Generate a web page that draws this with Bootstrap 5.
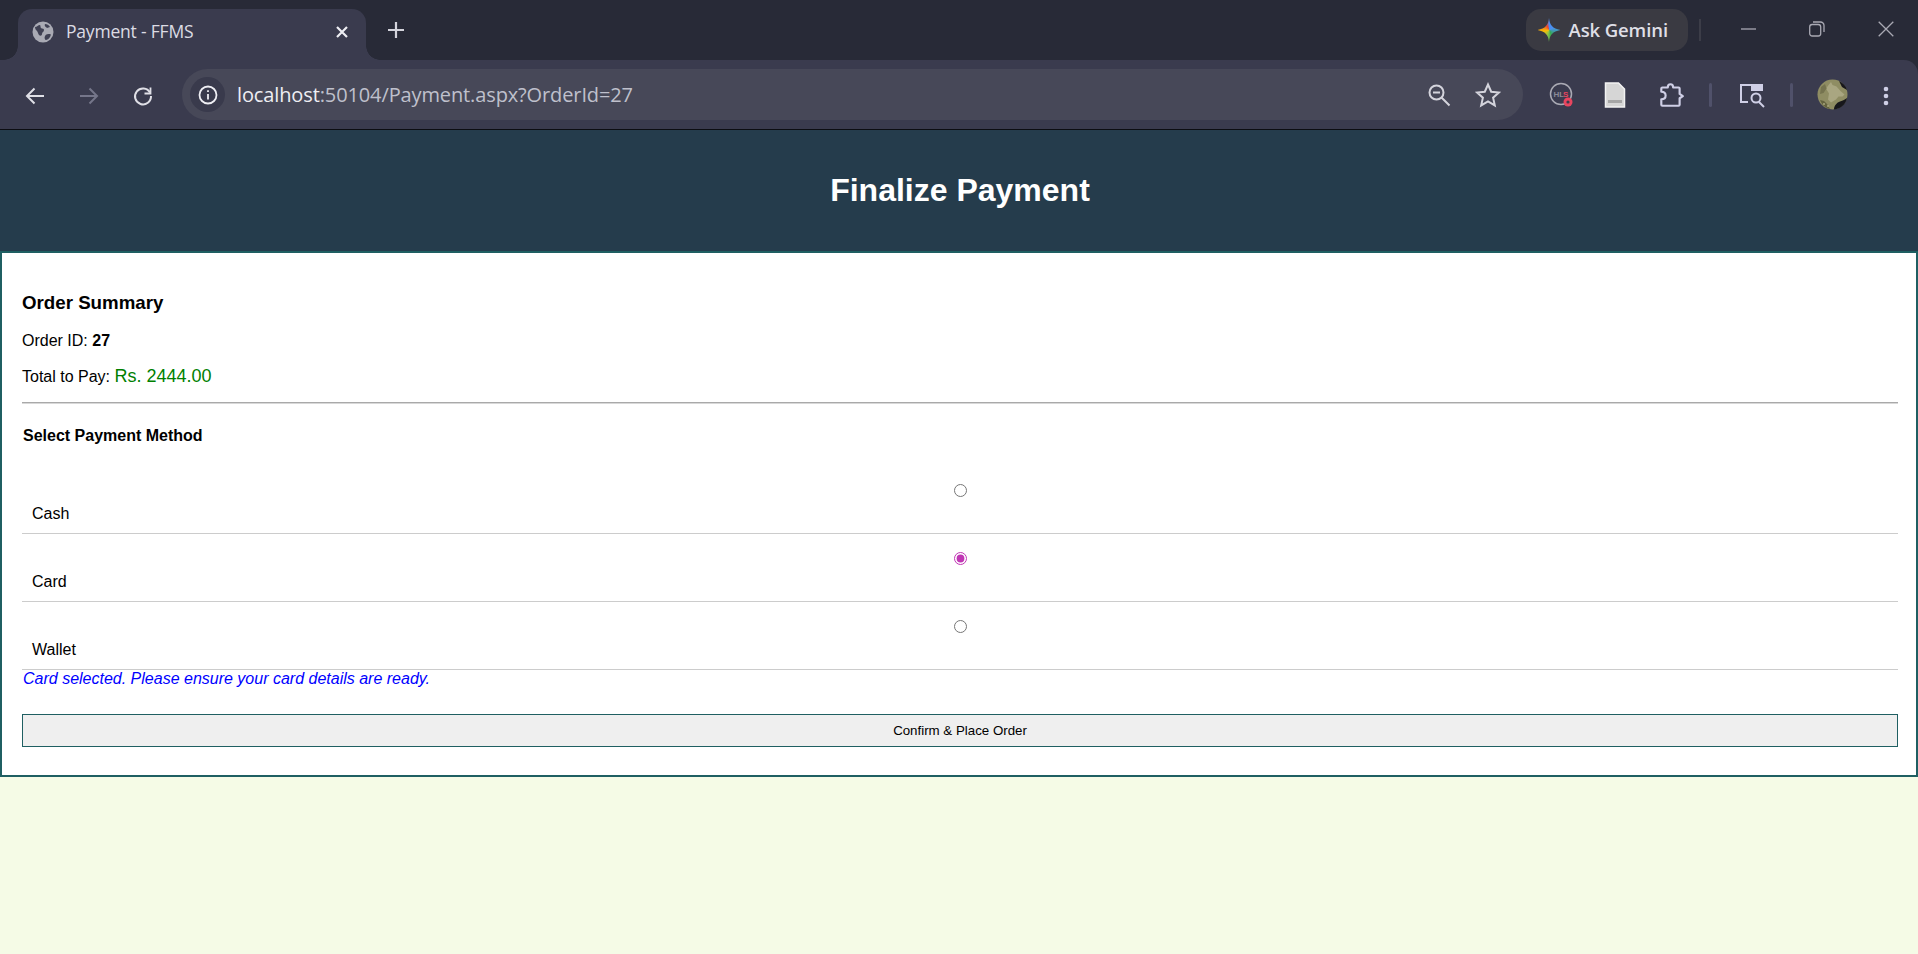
<!DOCTYPE html>
<html lang="en">
<head>
    <meta charset="UTF-8">
    <meta name="viewport" content="width=device-width, initial-scale=1.0">
    <title>Payment - FFMS</title>
    <link href="https://cdn.jsdelivr.net/npm/bootstrap@5.3.1/dist/css/bootstrap.min.css" rel="stylesheet">
    <style>
        body {
            font-family: "Liberation Sans", Arial, sans-serif;
            font-size: 16px;
            color: #000;
            background: #f5fbe6;
            min-height: 100vh;
            overflow: hidden;
        }
        /* browser frame */
        .win-frame { background: #282a37; }
        .win-top {
            height: 60px;
            padding-left: 18px;
            font-family: "Open Sans", "Noto Sans", sans-serif;
        }
        .win-tab {
            width: 348px;
            height: 51px;
            margin-top: 9px;
            background: #3a3b4e;
            border-radius: 14px 14px 0 0;
            padding: 0 17px 6px 14px;
            position: relative;
            color: #dcdce4;
        }
        .win-tab::before, .win-tab::after {
            content: "";
            position: absolute;
            bottom: 0;
            width: 14px;
            height: 14px;
            background: radial-gradient(circle at 0 0, #282a37 13.5px, #3a3b4e 14px);
        }
        .win-tab::before { left: -14px; }
        .win-tab::after { right: -14px; background: radial-gradient(circle at 100% 0, #282a37 13.5px, #3a3b4e 14px); }
        .tab-title { font-size: 17.500px; letter-spacing: -.2px; margin-left: 12px; }
        .new-tab { margin-left: 8px; margin-top: 8px; }
        .ask-pill {
            width: 162px;
            height: 42px;
            margin-top: 9px;
            background: #3a3a42;
            border-radius: 15px;
            padding-left: 12px;
            color: #dfdfe6;
            font-size: 18.500px;
            font-weight: 600;
            letter-spacing: -.1px;
        }
        .ask-star {
            width: 23px;
            height: 24px;
            margin-right: 8px;
            background: conic-gradient(#4c8df0 0deg, #4a90f0 60deg, #34a853 160deg, #8bc34a 200deg, #fbbc04 260deg, #ea4335 330deg, #4c8df0 360deg);
            clip-path: path("M11.500 0C12.200 7 15 10.600 23 12C15 13.400 12.200 17 11.500 24C10.800 17 8 13.400 0 12C8 10.600 10.800 7 11.500 0Z");
        }
        .win-sep { width: 2px; height: 22px; margin: 19px 14px 0 11px; background: #3c3d48; }
        .win-ctls { margin-right: -2px; }
        .win-ctl { width: 68.500px; height: 58px; }
        .tool-row {
            height: 69px;
            background: #3a3b4e;
            border-radius: 0 14px 0 0;
            padding-left: 8px;
            font-family: "Open Sans", "Noto Sans", sans-serif;
        }
        .tool-btn { width: 54px; flex: none; }
        .tool-hls { margin-left: 11px; }
        .tool-ext { margin-left: 2px; }
        .omni {
            width: 1341px;
            height: 51px;
            margin-left: 12px;
            border-radius: 26px;
            background: #474858;
            padding: 0 8px;
            flex: none;
        }
        .omni-info {
            width: 35px;
            height: 35px;
            border-radius: 50%;
            background: #393a4c;
        }
        .omni-url { margin-left: 12px; font-size: 20px; letter-spacing: -.12px; color: #bfc0cc; }
        .omni-url b { font-weight: 400; color: #eeeef3; }
        .omni-star { margin: 0 14px 0 24px; }
        .tool-sep { width: 3px; height: 24px; margin: 0 12.5px 0 11px; background: #50516a; flex: none; border-radius: 2px; }
        .frame-line { height: 1px; background: #0c0d12; }

        /* page */
        .page-head {
            height: 121px;
            padding-left: 2px;
            background: #253c4c;
            color: #fff;
        }
        .page-head h1 { font-size: 32px; font-weight: 700; margin: 0; }
        .pay-box {
            height: 526px;
            background: #fff;
            border: 2px solid #1f5f62;
            padding: 39px 18px 0 20px;
        }
        .pay-title { font-size: 18.720px; font-weight: 700; line-height: 22px; margin: 0 0 17px; }
        .pay-line { line-height: 20px; margin: 0; }
        .pay-total { margin-top: 15px; height: 20px; }
        .pay-amount { font-size: 18px; color: #008000; }
        .pay-rule { margin: 16px 0 1px; border: 0; border-top: 1px solid #a9a9a9; box-shadow: 0 1px 0 #d8d8d8; opacity: 1; }
        .pay-sub { font-weight: 700; line-height: 20px; margin: 23px 0 0 1px; }
        .pay-list { margin-top: 20px; }
        .pay-row {
            height: 68px;
            padding: 17.500px 10px 0;
            border-bottom: 1px solid #ccc;
        }
        .pay-row input {
            display: block;
            width: 13px;
            height: 13px;
            margin: 0 auto;
            accent-color: #c036b4;
        }
        .pay-row label { display: block; line-height: 20px; margin-top: 7.500px; }
        .pay-note { font-style: italic; color: #00f; line-height: 18px; margin: 0 0 0 1px; }
        .pay-btn {
            height: 33px;
            margin-top: 26px;
            background: #efefef;
            border: 1px solid #1f5f62;
            border-radius: 0;
            padding: 0;
            font-size: 13.300px;
            color: #000;
        }
        .pay-btn:hover, .pay-btn:active { background: #e5e5e5; border-color: #1f5f62; color: #000; }
    </style>
</head>
<body>
    <!-- browser frame -->
    <div class="win-frame">
    <div class="win-top d-flex align-items-start">
        <div class="win-tab d-flex align-items-center">
            <svg width="22" height="22" viewBox="0 0 22 22">
                <circle cx="11" cy="11" r="10.500" fill="#a9aab4"/>
                <path d="M3 6c2 0 3-2 5-2 1 1 0 2 1 3s3 0 3 2-2 2-2 4-2 2-3 1-1-3-2-4-2-2-2-4zM13 15c1-2 3-2 5-2 1 0 1 1 0 3-1 2-3 3-4 3s-2-2-1-4zM13 3c2 0 4 1 5 3l-3 1c-1-1-3-2-2-4z" fill="#3f4053"/>
            </svg>
            <span class="tab-title flex-grow-1">Payment - FFMS</span>
            <svg width="14" height="14" viewBox="0 0 14 14"><path d="M2 2l10 10M12 2L2 12" stroke="#eeeef3" stroke-width="2.200"/></svg>
        </div>
        <svg class="new-tab" width="44" height="44" viewBox="0 0 44 44"><path d="M22 14v16M14 22h16" stroke="#d4d4dc" stroke-width="2.200"/></svg>
        <div class="ask-pill d-flex align-items-center ms-auto">
            <div class="ask-star"></div>
            <span>Ask Gemini</span>
        </div>
        <div class="win-sep"></div>
        <div class="win-ctls d-flex">
            <div class="win-ctl d-flex align-items-center justify-content-center"><svg width="16" height="16" viewBox="0 0 16 16"><path d="M0 8h15" stroke="#a9a9b3" stroke-width="1.300"/></svg></div>
            <div class="win-ctl d-flex align-items-center justify-content-center"><svg width="16" height="16" viewBox="0 0 16 16" fill="none" stroke="#a9a9b3" stroke-width="1.300"><rect x=".7" y="3.500" width="11" height="11.500" rx="2.500"/><path d="M4 1h7.500a3.500 3.500 0 0 1 3.500 3.500V11"/></svg></div>
            <div class="win-ctl d-flex align-items-center justify-content-center"><svg width="16" height="16" viewBox="0 0 16 16"><path d="M.7.7l14.600 14.600M15.300.7L.7 15.300" stroke="#a9a9b3" stroke-width="1.300"/></svg></div>
        </div>
    </div>
    <div class="tool-row d-flex align-items-center">
        <div class="tool-btn text-center"><svg width="22" height="22" viewBox="0 0 22 22" fill="none" stroke="#dfdfe6" stroke-width="2"><path d="M20 11H3M10.500 3.500L3 11l7.500 7.500"/></svg></div>
        <div class="tool-btn text-center"><svg width="22" height="22" viewBox="0 0 22 22" fill="none" stroke="#75768a" stroke-width="2"><path d="M2 11h17M11.500 3.500L19 11l-7.500 7.500"/></svg></div>
        <div class="tool-btn text-center"><svg width="22" height="22" viewBox="0 0 22 22" fill="none" stroke="#dfdfe6" stroke-width="2"><path d="M18 7.500A8 8 0 1 0 19 11"/><path d="M18.500 2.500v6h-6" stroke-width="1.800"/></svg></div>
        <div class="omni d-flex align-items-center">
            <div class="omni-info d-flex align-items-center justify-content-center">
                <svg width="20" height="20" viewBox="0 0 20 20" fill="none" stroke="#eeeef3" stroke-width="1.800"><circle cx="10" cy="10" r="8.500"/><path d="M10 9v5.500M10 5.200v1.800"/></svg>
            </div>
            <span class="omni-url flex-grow-1"><b>localhost</b>:50104/Payment.aspx?OrderId=27</span>
            <svg width="24" height="24" viewBox="0 0 24 24" fill="none" stroke="#d4d4dc" stroke-width="2"><circle cx="9.500" cy="9.500" r="7"/><path d="M6 9.500h7M14.500 14.500l8 8"/></svg>
            <svg class="omni-star" width="26" height="26" viewBox="0 0 26 26" fill="none" stroke="#d4d4dc" stroke-width="2"><path d="M13 2.500l3.200 7.200 7.800.8-5.900 5.200 1.700 7.700L13 19.400l-6.800 4 1.700-7.700L2 10.500l7.800-.8z"/></svg>
        </div>
        <div class="tool-btn tool-hls text-center">
            <svg width="26" height="26" viewBox="-1 0 26 26"><circle cx="12" cy="12" r="10.500" fill="none" stroke="#aaaab4" stroke-width="1.500"/><text x="4.500" y="15" font-family="Liberation Sans" font-size="8" font-weight="700" fill="#8a8a96">HL</text><text x="14" y="15" font-family="Liberation Sans" font-size="8" font-weight="700" fill="#e8455f">S</text><circle cx="19" cy="20" r="4.500" fill="#e8455f"/><circle cx="19" cy="20" r="1.600" fill="#3a3b4e"/></svg>
        </div>
        <div class="tool-btn text-center">
            <svg width="22" height="26" viewBox="0 0 22 26"><path d="M1.500 1h13l6 6v18h-19z" fill="#d6d6d6" stroke="#f2f2f2" stroke-width="1.500"/><rect x="4" y="18" width="14" height="3" fill="#a6a6a6"/></svg>
        </div>
        <div class="tool-btn tool-ext text-center">
            <svg width="28" height="28" viewBox="0 0 26 26" fill="none" stroke="#cfcfe6" stroke-width="2" stroke-linejoin="round"><path d="M5 6h5c0-4 5-4 5 0h5a1 1 0 0 1 1 1v5l3 2-3 2v6a1 1 0 0 1-1 1H5a1 1 0 0 1-1-1v-5c3 0 4-2 4-3.500S7 10 4 10V7a1 1 0 0 1 1-1z"/></svg>
        </div>
        <div class="tool-sep"></div>
        <div class="tool-btn text-center">
            <svg width="28" height="26" viewBox="0 0 28 26" fill="none" stroke="#cfcfe6" stroke-width="2"><path d="M10 20H3V3h21v6"/><path d="M13 2h12v7H13z" fill="#cfcfe6" stroke="none"/><circle cx="18" cy="16" r="4.500"/><path d="M21 20l5 5"/></svg>
        </div>
        <div class="tool-sep"></div>
        <div class="tool-btn text-center">
            <svg width="31" height="31" viewBox="0 0 31 31">
                <circle cx="15.500" cy="15.500" r="15" fill="#8f8d63"/>
                <path d="M30 19c-1 6-6 11-13 11.500 0-4 3-7 6-8 3-1 5-2 7-3.500zM22 2c4 2 7 5 8 9l-5-3z" fill="#17171b"/>
                <path d="M14 3l1.500 3 4 1.500 4 4.500 4 3.500-2 2-4 0-2.500 3-5 3-3-3 1-6-3-5 3-4z" fill="#a9a681"/>
                <path d="M4 8l4-3 1.500 4.500-3 4.500-3.500 1z" fill="#75734f"/>
                <path d="M3 21l4 1 3 3 3 5c-4-.5-8-4-10-9z" fill="#64633f"/>
                <circle cx="7" cy="25" r="1" fill="#a8a67e"/>
                <circle cx="11" cy="27" r="1" fill="#a8a67e"/>
            </svg>
        </div>
        <div class="tool-btn text-center">
            <svg width="6" height="20" viewBox="0 0 6 20" fill="#cfcfe6"><circle cx="3" cy="3" r="2.300"/><circle cx="3" cy="10" r="2.300"/><circle cx="3" cy="17" r="2.300"/></svg>
        </div>
    </div>
    <div class="frame-line"></div>
    </div>

    <!-- page -->
    <header class="page-head d-flex align-items-center justify-content-center">
        <h1>Finalize Payment</h1>
    </header>
    <main class="pay-box">
        <h2 class="pay-title">Order Summary</h2>
        <p class="pay-line">Order ID: <strong>27</strong></p>
        <p class="pay-line pay-total">Total to Pay: <span class="pay-amount">Rs. 2444.00</span></p>
        <hr class="pay-rule">
        <p class="pay-sub">Select Payment Method</p>
        <div class="pay-list">
            <div class="pay-row"><input type="radio" name="method" id="payCash"><label for="payCash">Cash</label></div>
            <div class="pay-row"><input type="radio" name="method" id="payCard" checked><label for="payCard">Card</label></div>
            <div class="pay-row"><input type="radio" name="method" id="payWallet"><label for="payWallet">Wallet</label></div>
        </div>
        <p class="pay-note">Card selected. Please ensure your card details are ready.</p>
        <button type="button" class="btn pay-btn w-100">Confirm &amp; Place Order</button>
    </main>

    <script src="https://cdn.jsdelivr.net/npm/bootstrap@5.3.1/dist/js/bootstrap.bundle.min.js"></script>
</body>
</html>
